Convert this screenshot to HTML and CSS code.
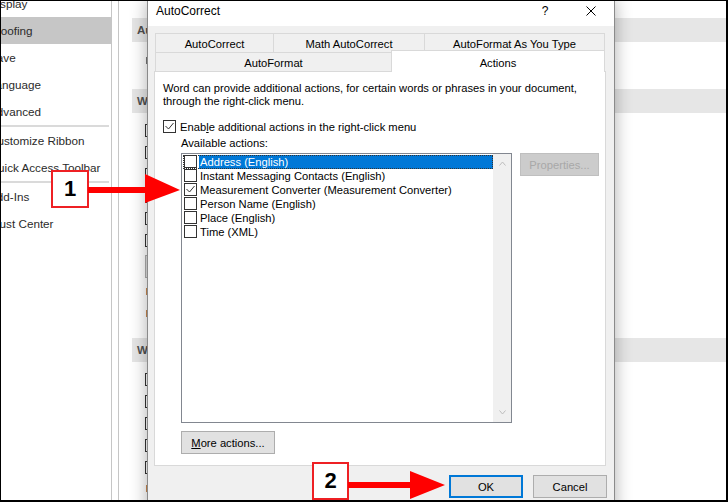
FILE: index.html
```html
<!DOCTYPE html>
<html lang="en">
<head>
<meta charset="utf-8">
<title>AutoCorrect - Actions</title>
<link rel="stylesheet" href="styles.css">
</head>
<body>
<div class="frame">
  <div class="options">
    <nav class="sidebar">
      <ul class="nav">
        <li>Display</li>
        <li class="active">Proofing</li>
        <li>Save</li>
        <li>Language</li>
        <li>Advanced</li>
        <li class="sep"></li>
        <li>Customize Ribbon</li>
        <li>Quick Access Toolbar</li>
        <li class="sep"></li>
        <li>Add-Ins</li>
        <li>Trust Center</li>
      </ul>
    </nav>
    <div class="main">
      <div class="sec-head">AutoCorrect options</div>
      <div class="intro"><span class="bg-mark"></span></div>
      <div class="sec-head"><span class="sec-title">When correcting spelling in Microsoft Office programs</span></div>
      <div class="bg-rows">
        <div class="bg-row"><span class="bg-cb"></span></div>
        <div class="bg-row"><span class="bg-cb"></span></div>
        <div class="bg-row"><span class="bg-cb"></span></div>
        <div class="bg-row"><span class="bg-cb"></span></div>
        <div class="bg-row"><span class="bg-cb"></span></div>
        <div class="bg-row"><span class="bg-cb"></span></div>
        <div class="bg-btn-row"><span class="bg-btn"></span></div>
        <div class="bg-text-row"><span class="bg-mark orange"></span></div>
        <div class="bg-text-row"><span class="bg-mark orange"></span></div>
      </div>
      <div class="sec-head sec-3">When correcting spelling and grammar in Word</div>
      <div class="bg-rows">
        <div class="bg-row"><span class="bg-cb"></span></div>
        <div class="bg-row"><span class="bg-cb"></span></div>
        <div class="bg-row"><span class="bg-cb"></span></div>
        <div class="bg-row"><span class="bg-cb"></span></div>
        <div class="bg-row"><span class="bg-cb"></span></div>
        <div class="bg-text-row"><span class="bg-mark orange"></span></div>
      </div>
    </div>
  </div>

  <div class="dialog">
    <div class="titlebar">
      <div class="title">AutoCorrect</div>
      <div class="cap-btn">?</div>
      <div class="cap-btn">
        <svg width="10" height="10" viewBox="0 0 10 10"><path d="M0.5 0.5 L9.5 9.5 M9.5 0.5 L0.5 9.5" stroke="#000" stroke-width="1" fill="none"/></svg>
      </div>
    </div>
    <div class="dlg-body">
      <div class="tabs">
        <div class="tab-row">
          <div class="tab w-ac">AutoCorrect</div>
          <div class="tab w-math">Math AutoCorrect</div>
          <div class="tab w-afayt last">AutoFormat As You Type</div>
        </div>
        <div class="tab-row">
          <div class="tab w-af">AutoFormat</div>
          <div class="tab w-act sel">Actions</div>
        </div>
      </div>
      <div class="pane">
        <div class="desc">
          <div>Word can provide additional actions, for certain words or phrases in your document,</div>
          <div>through the right-click menu.</div>
        </div>
        <div class="enable">
          <span class="cb"><svg width="11" height="11" viewBox="0 0 11 11"><polyline points="1.5,5 4.5,8 9.5,2" fill="none" stroke="#333" stroke-width="1"/></svg></span>
          <span class="enable-lbl">Enab<u>l</u>e additional actions in the right-click menu</span>
        </div>
        <div class="avail">Available actions:</div>
        <div class="list-row">
          <div class="listbox">
            <div class="items">
              <div class="item focus sel"><span class="cb"></span><span class="lbl">Address (English)</span></div>
              <div class="item"><span class="cb"></span><span class="lbl">Instant Messaging Contacts (English)</span></div>
              <div class="item"><span class="cb"><svg width="11" height="11" viewBox="0 0 11 11"><polyline points="1.5,5 4.5,8 9.5,2" fill="none" stroke="#333" stroke-width="1"/></svg></span><span class="lbl">Measurement Converter (Measurement Converter)</span></div>
              <div class="item"><span class="cb"></span><span class="lbl">Person Name (English)</span></div>
              <div class="item"><span class="cb"></span><span class="lbl">Place (English)</span></div>
              <div class="item"><span class="cb"></span><span class="lbl">Time (XML)</span></div>
            </div>
            <div class="scroll">
              <svg width="7" height="5" viewBox="0 0 7 5"><polyline points="0.5,4.5 3.5,1 6.5,4.5" fill="none" stroke="#bdbdbd" stroke-width="1"/></svg>
              <svg width="7" height="5" viewBox="0 0 7 5"><polyline points="0.5,0.5 3.5,4 6.5,0.5" fill="none" stroke="#bdbdbd" stroke-width="1"/></svg>
            </div>
          </div>
          <div class="props">Properties...</div>
        </div>
        <div class="btn more"><span><u>M</u>ore actions...</span></div>
      </div>
      <div class="footer">
        <div class="btn default">OK</div>
        <div class="btn">Cancel</div>
      </div>
    </div>
  </div>

  <div class="callout callout-1">1</div>
  <svg class="arrow arrow-1" width="94" height="32" viewBox="0 0 94 32">
    <rect x="0" y="14" width="59" height="6" fill="#ff0000"/>
    <polygon points="57,1 92,17 57,30" fill="#ff0000"/>
  </svg>
  <div class="callout callout-2">2</div>
  <svg class="arrow arrow-2" width="98" height="32" viewBox="0 0 98 32">
    <rect x="0" y="12" width="64" height="6" fill="#ff0000"/>
    <polygon points="62,1 97,15 62,29" fill="#ff0000"/>
  </svg>
</div>
</body>
</html>
```
FILE: styles.css
```css
* { box-sizing: border-box; }
html, body { margin: 0; padding: 0; background: #fff; }
body { font-family: "Liberation Sans", Arial, sans-serif; color: #000; }

.frame {
  position: relative;
  width: 728px;
  height: 502px;
  border-style: solid;
  border-color: #000;
  border-width: 1px 2px 2px 1px;
  overflow: hidden;
  background: #fff;
}

/* ---------- Word Options background ---------- */
.options { display: flex; height: 100%; }
.sidebar {
  width: 111px;
  flex: none;
  border-right: 1px solid #c6c6c6;
  overflow: hidden;
}
.nav {
  list-style: none;
  margin: -11px 0 0 -12px;
  padding: 0;
  font-size: 11.7px;
  color: #2b2b2b;
}
.nav li { height: 27px; line-height: 27px; white-space: nowrap; }
.nav li.active { background: #c6c6c6; }
.nav li.sep { height: 2px; background: #dadada; margin-right: 2px; }

.main {
  flex: 1;
  margin-left: 6px;
  border-left: 1px solid #c6c6c6;
  padding: 17px 0 0 13px;
  font-size: 11.2px;
  white-space: nowrap;
}
.sec-head {
  height: 24px;
  line-height: 24px;
  background: #e6e6e6;
  padding-left: 5px;
  font-weight: bold;
  font-size: 11.5px;
  color: #505050;
}
.sec-3 { margin-top: 12px; }
.intro { height: 47px; padding: 15px 0 0 13px; }
.bg-mark { display: block; margin-left: 1px; width: 2px; height: 7px; background: #777; }
.bg-mark.orange { background: #c98a52; }
.bg-rows { margin-top: 7px; padding-left: 13px; }
.bg-row { height: 22px; display: flex; align-items: flex-start; padding-top: 4px; }
.bg-cb { width: 13px; height: 13px; border: 1px solid #333; background: #fff; flex: none; }
.bg-btn-row { height: 30px; padding-top: 3px; }
.bg-btn { display: block; width: 120px; height: 23px; border: 1px solid #adadad; background: #e1e1e1; }
.bg-text-row { height: 22px; padding-top: 6px; }

/* ---------- Dialog ---------- */
.dialog {
  position: absolute;
  left: 146px;
  top: -1px;
  width: 468px;
  height: 520px;
  border: 1px solid #8a8a8a;
  background: #f0f0f0;
  box-shadow: 0 0 16px rgba(0, 0, 0, 0.32);
  font-size: 11.2px;
  white-space: nowrap;
}
.titlebar { height: 25px; background: #fff; display: flex; align-items: flex-start; }
.title { flex: 1; padding-left: 8px; line-height: 20px; font-size: 12px; }
.cap-btn {
  width: 46px;
  height: 20px;
  display: flex;
  align-items: center;
  justify-content: center;
  font-size: 12px;
}
.dlg-body { padding-top: 7px; }

.tabs { margin-left: 7px; width: 450px; }
.tab-row { display: flex; height: 19px; align-items: flex-start; }
.tab {
  height: 19px;
  line-height: 20px;
  text-align: center;
  border-top: 1px solid #d9d9d9;
  border-left: 1px solid #d9d9d9;
  background: #f0f0f0;
}
.tab.last { border-right: 1px solid #d9d9d9; }
.w-ac { width: 118px; }
.w-math { width: 151px; }
.w-afayt { width: 181px; }
.w-af { width: 236px; }
.w-act { width: 214px; }
.tab.sel {
  height: 22px;
  margin-top: -2px;
  padding-top: 2px;
  background: #fff;
  border-right: 1px solid #d9d9d9;
  position: relative;
  z-index: 1;
}

.pane {
  margin-left: 6px;
  width: 452px;
  height: 395px;
  border: 1px solid #d9d9d9;
  background: #fff;
  padding: 10px 0 0 8px;
}
.desc { line-height: 13px; }
.cb {
  width: 13px;
  height: 13px;
  border: 1px solid #333;
  background: #fff;
  flex: none;
  display: block;
}
.cb svg { display: block; }
.enable { display: flex; align-items: center; height: 13px; margin-top: 12px; gap: 4px; }
.avail { margin: 4px 0 0 18px; line-height: 13px; }
.list-row { display: flex; align-items: flex-start; margin: 3px 0 0 18px; }
.listbox {
  width: 331px;
  height: 270px;
  border: 1px solid #828790;
  background: #fff;
  display: flex;
}
.items { flex: 1; padding-top: 1px; }
.item { display: flex; height: 14px; margin-left: 1px; }
.item .cb { margin-left: 1px; }
.item .lbl { flex: 1; margin-left: 2px; padding: 1px 0 0 1px; line-height: 13px; }
.item.sel .lbl { background: #0078d7; color: #fff; }
.item.focus { outline: 1px dotted #333; outline-offset: -1px; }
.scroll {
  width: 18px;
  background: #f0f0f0;
  display: flex;
  flex-direction: column;
  justify-content: space-between;
  align-items: center;
  padding: 7px 0 7px;
}
.scroll svg { display: block; }
.props {
  margin-left: 8px;
  width: 79px;
  height: 23px;
  border: 1px solid #bfbfbf;
  background: #cccccc;
  color: #a8a8a8;
  display: flex;
  align-items: center;
  justify-content: center;
}
.btn {
  width: 74px;
  height: 23px;
  border: 1px solid #adadad;
  background: #e1e1e1;
  display: flex;
  align-items: center;
  justify-content: center;
}
.btn.more { width: 94px; margin: 8px 0 0 18px; }
.btn.default { border: 2px solid #0078d7; }
.footer {
  display: flex;
  justify-content: flex-end;
  gap: 10px;
  padding-right: 7px;
  margin-top: 9px;
}

/* ---------- Annotations ---------- */
.callout {
  position: absolute;
  width: 38px;
  height: 38px;
  border: 2px solid #ee2024;
  background: #fff;
  display: flex;
  align-items: center;
  justify-content: center;
  font-family: "Liberation Sans", Arial, sans-serif;
  font-weight: bold;
  font-size: 22px;
  color: #000;
}
.callout-1 { left: 50px; top: 169px; }
.callout-2 { left: 311px; top: 461px; width: 37px; }
.arrow { position: absolute; display: block; }
.arrow-1 { left: 87px; top: 172px; }
.arrow-2 { left: 347px; top: 469px; }
```
